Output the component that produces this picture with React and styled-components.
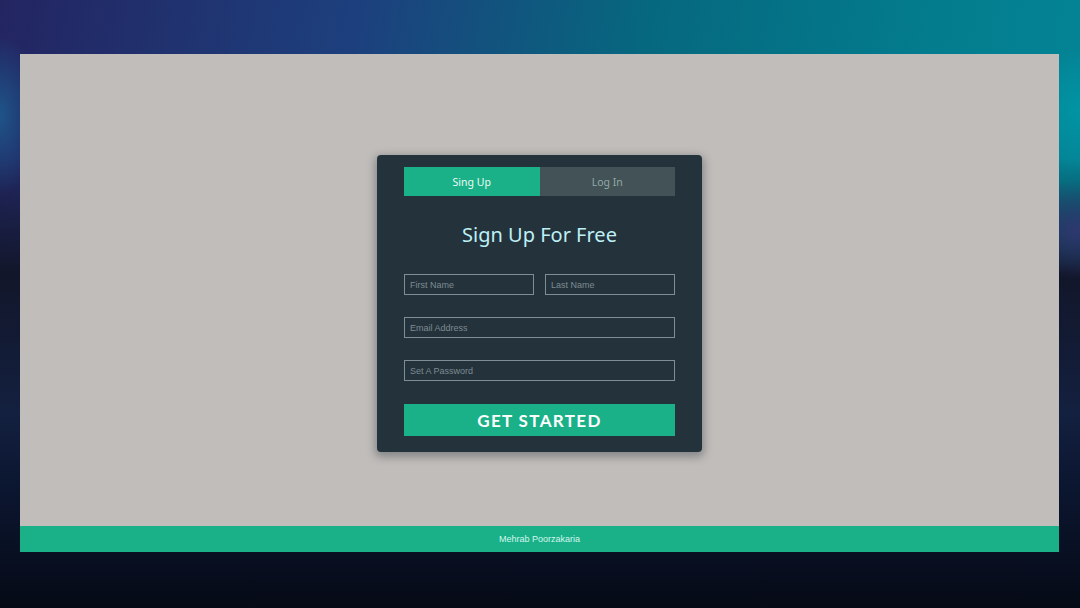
import React from "react";
import styled, { createGlobalStyle } from "styled-components";

const Global = createGlobalStyle`
  html, body { margin: 0; padding: 0; }
  body { font-family: "Liberation Sans", Arial, sans-serif; }
  * { box-sizing: border-box; }
`;

const Screen = styled.div`
  width: 1080px;
  height: 608px;
  padding: 54px 21px 56px 20px;
  display: flex;
  flex-direction: column;
  background:
    radial-gradient(ellipse 40px 80px at 0px 115px, rgba(28, 100, 150, 0.75), rgba(28, 100, 150, 0) 100%),
    radial-gradient(ellipse 60px 60px at 1080px 110px, rgba(0, 155, 170, 0.7), rgba(0, 155, 170, 0) 100%),
    radial-gradient(ellipse 70px 50px at 1080px 230px, rgba(50, 55, 115, 0.9), rgba(50, 55, 115, 0) 100%),
    linear-gradient(180deg, rgba(18, 22, 42, 0) 0%, rgba(18, 22, 42, 0) 26%, rgba(18, 22, 42, 1) 45%, #13203f 68%, #0b1630 80%, #060a16 100%),
    linear-gradient(100deg, #232561 0%, #1d3f7d 30%, #06687f 55%, #037d8e 80%, #04889a 100%);
`;

const Panel = styled.main`
  flex: 1;
  background: #c1bdba;
  display: flex;
  align-items: center;
  justify-content: center;
`;

const Card = styled.div`
  width: 325px;
  margin-top: 27px;
  padding: 12px 27px 16px;
  background: #24323b;
  border-radius: 4px;
  box-shadow: 0 3px 8px 2px rgba(19, 35, 47, 0.35);
`;

const Tabs = styled.div`
  display: flex;
  height: 29px;
`;

const Tab = styled.div`
  flex: 1;
  display: flex;
  align-items: center;
  justify-content: center;
  font-family: "Noto Sans", "Open Sans", sans-serif;
  font-size: 10.5px;
  background: ${(p) => (p.$active ? "#1ab188" : "#435257")};
  color: ${(p) => (p.$active ? "#eefaf6" : "#92aaa4")};
`;

const Title = styled.h1`
  margin: 24px 0 24px;
  height: 30px;
  line-height: 30px;
  text-align: center;
  font-family: "Noto Sans", "Open Sans", sans-serif;
  font-weight: 400;
  font-size: 20px;
  color: #bdf0f6;
`;

const Form = styled.form`
  display: flex;
  flex-direction: column;
  gap: 22px;
`;

const Row = styled.div`
  display: flex;
  gap: 11px;
`;

const Input = styled.input`
  flex: ${(p) => (p.$half ? "1 1 0" : "none")};
  min-width: 0;
  width: 100%;
  height: 21px;
  padding: 0 5px;
  background: transparent;
  border: 1px solid #7d8e94;
  border-radius: 0;
  font-family: "Liberation Sans", Arial, sans-serif;
  font-size: 9px;
  color: #ddeeee;
  outline: none;
  &::placeholder { color: #7d8b91; }
`;

const Button = styled.button`
  margin-top: 1px;
  height: 32px;
  border: 0;
  background: #1ab188;
  color: #ffffff;
  font-family: "Lato", "Noto Sans", sans-serif;
  font-weight: 700;
  font-size: 17px;
  letter-spacing: 0.08em;
  text-transform: uppercase;
  cursor: pointer;
`;

const Footer = styled.footer`
  height: 26px;
  background: #1ab188;
  display: flex;
  align-items: center;
  justify-content: center;
  font-family: "Liberation Sans", Arial, sans-serif;
  font-size: 9px;
  color: #d4f6ee;
`;

export default function App() {
  return (
    <>
      <Global />
      <Screen>
        <Panel>
          <Card>
            <Tabs>
              <Tab $active>Sing Up</Tab>
              <Tab>Log In</Tab>
            </Tabs>
            <Title>Sign Up For Free</Title>
            <Form onSubmit={(e) => e.preventDefault()}>
              <Row>
                <Input $half placeholder="First Name" />
                <Input $half placeholder="Last Name" />
              </Row>
              <Input placeholder="Email Address" />
              <Input placeholder="Set A Password" type="password" />
              <Button type="submit">Get Started</Button>
            </Form>
          </Card>
        </Panel>
        <Footer>Mehrab Poorzakaria</Footer>
      </Screen>
    </>
  );
}
